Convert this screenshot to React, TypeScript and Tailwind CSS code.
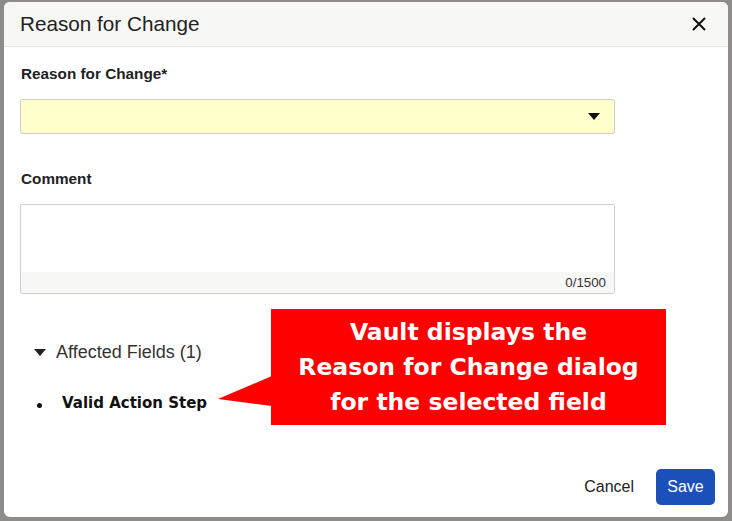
import React from "react";

export default function App() {
  return (
    <div className="w-[732px] h-[521px] bg-[#8f8b8b] pt-[2px] pl-[4px] overflow-hidden" style={{ fontFamily: '"Liberation Sans", Arial, sans-serif' }}>
      <div className="relative w-[724px] h-[515px] bg-white rounded-[6px] overflow-hidden flex flex-col">
        {/* header */}
        <div className="h-[45px] bg-[#f7f7f5] border-b border-[#e4e4e4] flex items-center justify-between pl-[16px] pr-[22px] shrink-0">
          <span className="text-[20.7px] text-[#222]">Reason for Change</span>
          <svg width="14" height="14" viewBox="0 0 14 14">
            <path d="M1.5 1.5 L12.5 12.5 M12.5 1.5 L1.5 12.5" stroke="#111" strokeWidth="2" strokeLinecap="round" />
          </svg>
        </div>
        {/* body */}
        <div className="flex flex-col pl-[16px] pr-[113px] pt-[18px]">
          <div className="text-[15.3px] font-bold text-[#222] leading-[18px] pl-[1px]">Reason for Change*</div>
          <div className="mt-[16px] h-[35px] bg-[#ffffcc] border border-[#cfcfcf] rounded-[2px] flex items-center justify-end pr-[14px]">
            <svg width="12" height="7" viewBox="0 0 12 7">
              <path d="M0 0 L12 0 L6 7 Z" fill="#111" />
            </svg>
          </div>
          <div className="mt-[36px] text-[15.3px] font-bold text-[#222] leading-[18px] pl-[1px]">Comment</div>
          <div className="mt-[16px] h-[90px] border border-[#cfcfcf] rounded-[2px] flex flex-col overflow-hidden">
            <div className="flex-1" />
            <div className="h-[21px] bg-[#f7f7f5] flex items-center justify-end pr-[8px] text-[13.3px] text-[#333]">0/1500</div>
          </div>
          <div className="mt-[47px] flex items-center pl-[14px] h-[22px]">
            <svg width="12" height="7" viewBox="0 0 12 7">
              <path d="M0 0 L12 0 L6 7 Z" fill="#222" />
            </svg>
            <span className="ml-[10px] text-[18px] text-[#333]">Affected Fields (1)</span>
          </div>
          <div className="mt-[30px] flex items-center pl-[17px] h-[20px]">
            <span className="w-[5px] h-[5px] rounded-full bg-[#111] mt-[4px]" />
            <span className="ml-[20px] text-[15px] font-bold text-[#111]" style={{ fontFamily: '"DejaVu Sans", sans-serif' }}>Valid Action Step</span>
          </div>
        </div>
        {/* footer */}
        <div className="mt-auto mb-[12px] flex items-center justify-end pr-[13px] gap-[22px]">
          <span className="text-[16px] text-[#222]">Cancel</span>
          <button className="h-[36px] w-[59px] rounded-[5px] bg-[#1b4fba] text-white text-[16px]">Save</button>
        </div>
        {/* callout annotation */}
        <div className="absolute left-[267px] top-[307px] w-[395px] h-[116px] bg-[#ff0000] flex flex-col items-center justify-center text-white font-bold text-[23.5px] leading-[35px]" style={{ fontFamily: '"DejaVu Sans", sans-serif' }}>
          <span>Vault displays the</span>
          <span>Reason for Change dialog</span>
          <span>for the selected field</span>
        </div>
        <svg className="absolute left-[213px] top-[373px]" width="56" height="32" viewBox="0 0 56 32">
          <path d="M55 1 L1 24 L55 31 Z" fill="#ff0000" />
        </svg>
      </div>
    </div>
  );
}
